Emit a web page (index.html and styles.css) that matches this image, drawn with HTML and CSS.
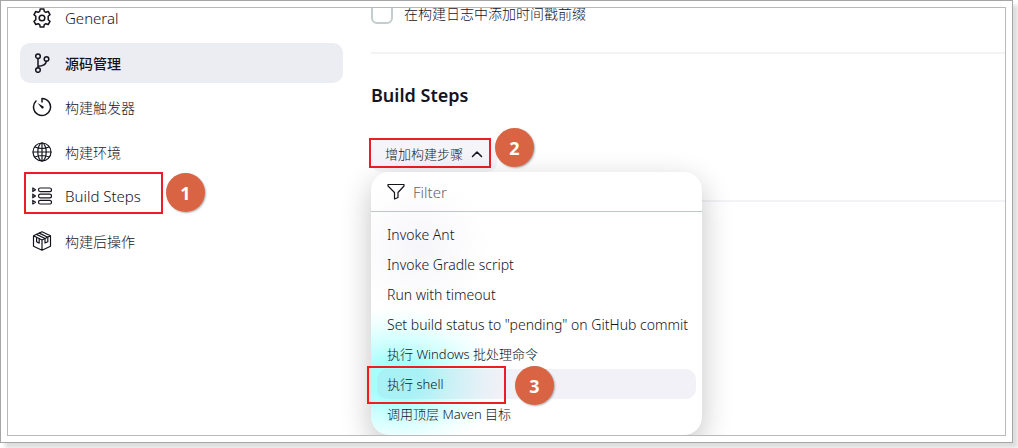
FILE: index.html
```html
<!DOCTYPE html>
<html lang="zh-CN">
<head>
    <meta charset="UTF-8">
    <meta name="viewport" content="width=device-width, initial-scale=1.0">
    <title>Build Steps</title>
    <link rel="stylesheet" href="styles.css">
</head>
<body>
    <div class="frame">
        <div class="page">
            <nav class="sidebar">
                <a class="task" href="#general" lang="en">
                    <svg class="icon" viewBox="0 0 20 20">
                        <path d="M8.2 1h3.6l.5 2.4 1.5.9 2.4-.8 1.8 3.1-1.8 1.6v3.6l1.8 1.6-1.8 3.1-2.4-.8-1.5.9-.5 2.4H8.2l-.5-2.4-1.5-.9-2.4.8L2 13.4l1.8-1.6V8.200L2 6.600l1.800-3.100 2.400.8 1.500-.9z"/>
                        <circle cx="10" cy="10" r="2.800"/>
                    </svg>
                    <span>General</span>
                </a>
                <a class="task active" href="#scm">
                    <svg class="icon" viewBox="0 0 20 20">
                        <circle cx="6" cy="3.200" r="2.300"/>
                        <circle cx="6" cy="17" r="2.300"/>
                        <circle cx="14.500" cy="6" r="2.300"/>
                        <path d="M6 5.500v9.200M14.300 8.300c-.4 3.200-3 4.700-8.300 4.900"/>
                    </svg>
                    <span>源码管理</span>
                </a>
                <a class="task" href="#triggers">
                    <svg class="icon" viewBox="0 0 20 20">
                        <path d="M10 5V1.500A8.500 8.500 0 1 1 4 4"/>
                        <path class="solid" d="M5.500 6l6 3.500a1.300 1.300 0 0 1-1.800 1.800z"/>
                    </svg>
                    <span>构建触发器</span>
                </a>
                <a class="task" href="#environment">
                    <svg class="icon thin" viewBox="0 0 20 20">
                        <circle cx="10" cy="10" r="9"/>
                        <ellipse cx="10" cy="10" rx="4.200" ry="9"/>
                        <path d="M1 10h18M10 1v18M3 5q7 3 14 0M3 15q7-3 14 0"/>
                    </svg>
                    <span>构建环境</span>
                </a>
                <a class="task boxed" href="#build-steps" lang="en">
                    <svg class="icon thin" viewBox="0 0 20 20">
                        <rect x="6.500" y="2" width="13" height="3.600" rx="1.800"/>
                        <rect x="6.500" y="8.200" width="13" height="3.600" rx="1.800"/>
                        <rect x="6.500" y="14.400" width="13" height="3.600" rx="1.800"/>
                        <path d="M.8 2v3.600l2.700-1.800zM.8 8.200v3.600L3.500 10zM.8 14.400V18l2.700-1.800z"/>
                    </svg>
                    <span>Build Steps</span>
                    <b class="badge">1</b>
                </a>
                <a class="task" href="#post-build">
                    <svg class="icon thin" viewBox="0 0 20 20">
                        <path d="M10 .8l8.500 4v10.400l-8.500 4-8.500-4V4.800zM1.500 4.800L10 9l8.500-4.200M10 9v10.200"/>
                        <path d="M4.500 3.400L13 7.500v4.500l2.800-1.300V6.200L7.300 2.100M4.600 6.500v4.300l2.600 1.300V7.700"/>
                    </svg>
                    <span>构建后操作</span>
                </a>
            </nav>

            <main class="config">
                <div class="check-row">
                    <input type="checkbox" id="timestamps">
                    <label for="timestamps">在构建日志中添加时间戳前缀</label>
                </div>

                <section class="section">
                    <h2>Build Steps</h2>
                    <div class="dropdown">
                        <button class="add-button boxed" type="button" aria-expanded="true">
                            <span>增加构建步骤</span>
                            <svg class="chevron" viewBox="0 0 12 12"><path d="M1.500 8.500L6 4l4.500 4.500"/></svg>
                            <b class="badge">2</b>
                        </button>
                        <div class="menu">
                            <div class="filter">
                                <svg viewBox="0 0 18 18"><path d="M1 1.500h16v1.500l-6 6.500v5l-3.500 1.500V9.500L1 3z"/></svg>
                                <input type="text" placeholder="Filter" aria-label="Filter">
                            </div>
                            <ul class="items">
                                <li><button type="button" lang="en">Invoke Ant</button></li>
                                <li><button type="button" lang="en">Invoke Gradle script</button></li>
                                <li><button type="button" lang="en">Run with timeout</button></li>
                                <li><button type="button" lang="en">Set build status to "pending" on GitHub commit</button></li>
                                <li><button type="button">执行 Windows 批处理命令</button></li>
                                <li class="boxed"><button class="selected" type="button">执行 shell</button><b class="badge">3</b></li>
                                <li><button type="button">调用顶层 Maven 目标</button></li>
                            </ul>
                        </div>
                    </div>
                </section>
                <div class="section"></div>
            </main>
        </div>
    </div>
</body>
</html>
```
FILE: styles.css
```css
*,
*::after {
    box-sizing: border-box;
}

body {
    margin: 0;
    height: 100vh;
    padding: 0 5px 5px 0;
    background-color: #fff;
    color: #14141f;
    font-family: "Noto Sans", "Noto Sans CJK SC", sans-serif;
    font-size: 14px;
    font-weight: 300;
    overflow: hidden;
}

button,
input {
    font: inherit;
    color: inherit;
}

.frame {
    height: 100%;
    padding: 6px;
    border: 1px solid #a6a6a6;
    background-color: #fff;
    box-shadow: 5px 5px 4px #ddd;
}

.page {
    display: flex;
    height: 100%;
    border: 1px solid #b9b9b9;
    overflow: hidden;
}

/* sidebar */
.sidebar {
    display: flex;
    flex: 0 0 335px;
    flex-direction: column;
    justify-content: space-between;
    height: 263px;
    margin-top: -10px;
    padding-left: 12px;
}

.task {
    display: flex;
    position: relative;
    align-items: center;
    gap: 13px;
    height: 40px;
    padding: 0 12px;
    border-radius: 10px;
    color: inherit;
    text-decoration: none;
}

.task:lang(en) {
    font-size: 15px;
}

.task.active {
    background-color: #ecedf3;
    font-weight: 500;
}

.icon {
    width: 20px;
    height: 20px;
}

svg {
    fill: none;
    stroke: #14141f;
    stroke-width: 1.5;
    stroke-linejoin: round;
    stroke-linecap: round;
}

.icon.thin {
    stroke-width: 1.2;
}

.icon .solid {
    fill: #14141f;
    stroke: none;
}

/* main column */
.config {
    flex: 1;
    padding-left: 28px;
}

.check-row {
    display: flex;
    align-items: center;
    gap: 11px;
    height: 22px;
    margin-top: -6px;
    margin-bottom: 28px;
}

.check-row input {
    appearance: none;
    width: 22px;
    height: 22px;
    margin: 0;
    border: 2px solid #c3cdd0;
    border-radius: 6px;
}

.section {
    height: 148px;
    border-top: 2px solid #f2f2f7;
}

.section h2 {
    margin: 0;
    padding: 28px 0 30px;
    font-size: 18px;
    font-weight: 600;
    line-height: 26px;
}

.dropdown {
    position: relative;
    width: 331px;
}

.add-button {
    display: flex;
    position: relative;
    align-items: center;
    gap: 8px;
    height: 34px;
    padding: 0 14px 3px;
    border: 0;
    border-radius: 10px;
    background-color: #f5f5f9;
    font-size: 13px;
}

.chevron {
    width: 12px;
    height: 12px;
}

/* popup menu */
.menu {
    position: absolute;
    z-index: 1;
    top: 34px;
    left: 0;
    width: 100%;
    border-radius: 18px;
    background:
        radial-gradient(ellipse 105px 72px at 26px 208px, #a4fffd 25%, #cbfffe 50%, #f0ffff 80%, rgba(255, 255, 255, 0)),
        radial-gradient(circle 70px at 48px 76px, #f6f6fa, rgba(255, 255, 255, 0)),
        #fff;
    box-shadow: 0 10px 30px rgba(0, 0, 0, 0.24);
}

.filter {
    display: flex;
    align-items: center;
    gap: 8px;
    height: 40px;
    padding: 0 16px;
    border-bottom: 1px solid #bfc6c8;
}

.filter svg {
    width: 18px;
    height: 18px;
    stroke-width: 1.2;
}

.filter input {
    flex: 1;
    min-width: 0;
    padding: 0;
    border: 0;
    background: none;
    outline: none;
    font-size: 15px;
}

.filter input::placeholder {
    color: #666;
    opacity: 1;
}

.items {
    margin: 0;
    padding: 7px 6px 6px;
    list-style: none;
}

.items li {
    position: relative;
}

.items button {
    display: block;
    width: 100%;
    height: 30px;
    padding: 0 10px 2px;
    border: 0;
    border-radius: 10px;
    background: none;
    font-size: 13px;
    text-align: left;
    white-space: nowrap;
}

.items button:lang(en) {
    padding-bottom: 0;
    font-size: 14px;
}

.items .selected {
    background-color: rgba(190, 190, 218, 0.22);
}

/* red callouts */
.boxed::after {
    content: "";
    position: absolute;
    border: 2px solid #ee1c25;
}

.task.boxed::after {
    top: -4px;
    left: 4px;
    width: 139px;
    height: 42px;
}

.add-button.boxed::after {
    top: 0;
    left: -2px;
    width: 122px;
    height: 30px;
}

.items .boxed::after {
    top: -3px;
    left: -10px;
    width: 139px;
    height: 38px;
}

.badge {
    display: grid;
    place-items: center;
    position: absolute;
    z-index: 2;
    width: 39px;
    height: 39px;
    border-radius: 50%;
    background-color: #d96444;
    box-shadow: 1px 1px 2px rgba(0, 0, 0, 0.3);
    color: #fff;
    font-size: 18px;
    font-weight: 700;
    line-height: 1;
}

.task .badge {
    top: -3px;
    left: 146px;
}

.add-button .badge {
    top: -10px;
    left: 124px;
}

.items .badge {
    top: -3px;
    left: 138px;
}
```
